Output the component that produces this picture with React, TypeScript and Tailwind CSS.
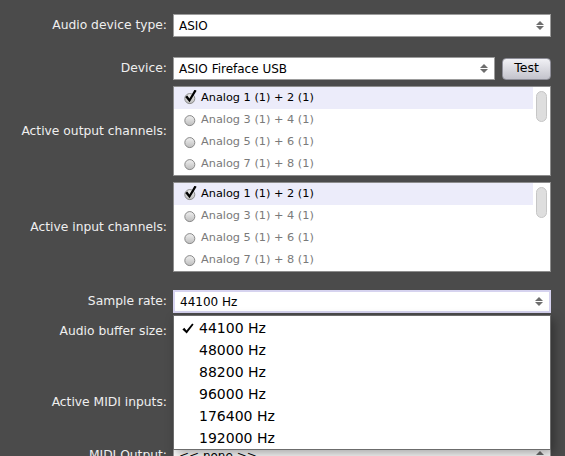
import React from "react";

const outputChannels = [
  "Analog 1 (1) + 2 (1)",
  "Analog 3 (1) + 4 (1)",
  "Analog 5 (1) + 6 (1)",
  "Analog 7 (1) + 8 (1)",
];

const rates = ["44100 Hz", "48000 Hz", "88200 Hz", "96000 Hz", "176400 Hz", "192000 Hz"];

function Arrows() {
  return (
    <svg width="8" height="9" viewBox="0 0 8 9" className="shrink-0">
      <path d="M0 4 L4 0 L8 4 Z" fill="#6e6e6e" />
      <path d="M0 5 L4 9 L8 5 Z" fill="#6e6e6e" />
    </svg>
  );
}

/**
 * Combo box with the up/down arrow glyph at the right edge.
 */
function Select({
  value,
  className = "",
}: {
  value: string;
  className?: string;
}) {
  return (
    <div
      className={
        "flex h-[23px] items-center justify-between bg-white pl-[5px] pr-[6px] text-[12px] text-black " +
        className
      }
    >
      <span>{value}</span>
      <Arrows />
    </div>
  );
}

function ChannelToggle({ on }: { on: boolean }) {
  return (
    <svg width="13" height="16" viewBox="0 0 13 16" className="shrink-0">
      <defs>
        <linearGradient id="rb" x1="0" y1="0" x2="0" y2="1">
          <stop offset="0" stopColor="#f0f0f0" />
          <stop offset="1" stopColor="#bdbdbd" />
        </linearGradient>
      </defs>
      <circle cx="5.8" cy="8.6" r="5" fill="url(#rb)" stroke="#8a8a8a" strokeWidth="1" />
      {on && (
        <path
          d="M1.2 7 L3.3 5.4 L5.4 8.5 L10.6 -0.4 L12.6 0.8 L5.6 12.2 Z"
          fill="#000"
        />
      )}
    </svg>
  );
}

function ChannelList({ items }: { items: string[] }) {
  return (
    <div className="relative h-[90px] border border-[#8d8d8d] bg-white">
      {items.map((item, i) => (
        <div
          key={item}
          className={
            "flex h-[22px] w-[359px] items-center gap-[4px] pl-[10px] text-[11.3px] " +
            (i === 0 ? "bg-[#ececfa] text-black" : "text-[#7a7a7a]")
          }
        >
          <ChannelToggle on={i === 0} />
          <span>{item}</span>
        </div>
      ))}
      {/* scrollbar thumb */}
      <div className="absolute right-[3px] top-[4px] h-[31px] w-[11px] rounded-full border border-[#c6c6c6] bg-[#dedede]" />
    </div>
  );
}

function Row({
  label,
  className = "",
  children,
}: {
  label: string;
  className?: string;
  children: React.ReactNode;
}) {
  return (
    <div className={"flex items-center gap-[6px] " + className}>
      <span className="w-[167px] shrink-0 text-right text-[12.3px] text-[#efefef]">{label}</span>
      <div className="relative w-[378px]">{children}</div>
    </div>
  );
}

export default function App() {
  return (
    <div className="relative h-[456px] w-[565px] overflow-hidden bg-[#4b4b4b] pt-[14px] font-['DejaVu_Sans',sans-serif]">
      <Row label="Audio device type:">
        <Select value="ASIO" className="border border-[#9c9c9c]" />
      </Row>

      <Row label="Device:" className="mt-[20px]">
        <div className="flex items-center gap-[7px]">
          <Select value="ASIO Fireface USB" className="w-[322px] border border-[#9c9c9c]" />
          <button className="h-[22px] w-[49px] rounded-[4px] border border-[#8e8e98] bg-gradient-to-b from-[#f1f1f5] to-[#c3c3cc] text-[12.5px] text-black">
            Test
          </button>
        </div>
      </Row>

      <Row label="Active output channels:" className="mt-[6px]">
        <ChannelList items={outputChannels} />
      </Row>

      <Row label="Active input channels:" className="mt-[6px]">
        <ChannelList items={outputChannels} />
      </Row>

      <Row label="Sample rate:" className="relative z-10 mt-[18px]">
        <Select value="44100 Hz" className="border-2 border-[#d6d3ef] pl-[4px] pr-[5px]" />

        {/* open drop-down menu */}
        <div className="absolute left-0 top-[calc(100%+2px)] w-[378px] border border-[#6c6c6c] bg-white pt-px shadow-[3px_4px_10px_rgba(0,0,0,0.35)]">
          {rates.map((r, i) => (
            <div key={r} className="flex h-[22px] items-center text-[14px] text-black">
              <span className="flex w-[25px] justify-start pl-[8px]">
                {i === 0 && (
                  <svg width="12" height="11" viewBox="0 0 12 11">
                    <path d="M0.4 6.4 L2.3 4.8 L4.5 7.4 L10.2 0.4 L11.6 1.5 L4.7 10.6 Z" fill="#000" />
                  </svg>
                )}
              </span>
              <span>{r}</span>
            </div>
          ))}
        </div>
      </Row>

      <Row label="Audio buffer size:" className="mt-[7px]">
        <Select value="512 samples (11.6 ms)" className="border border-[#9c9c9c]" />
      </Row>

      <Row label="Active MIDI inputs:" className="mt-[19px]">
        <div className="h-[80px] border border-[#8d8d8d] bg-white" />
      </Row>

      <Row label="MIDI Output:" className="mt-[2px]">
        <Select value="<< none >>" className="border border-[#9c9c9c] text-[#333]" />
      </Row>
    </div>
  );
}
